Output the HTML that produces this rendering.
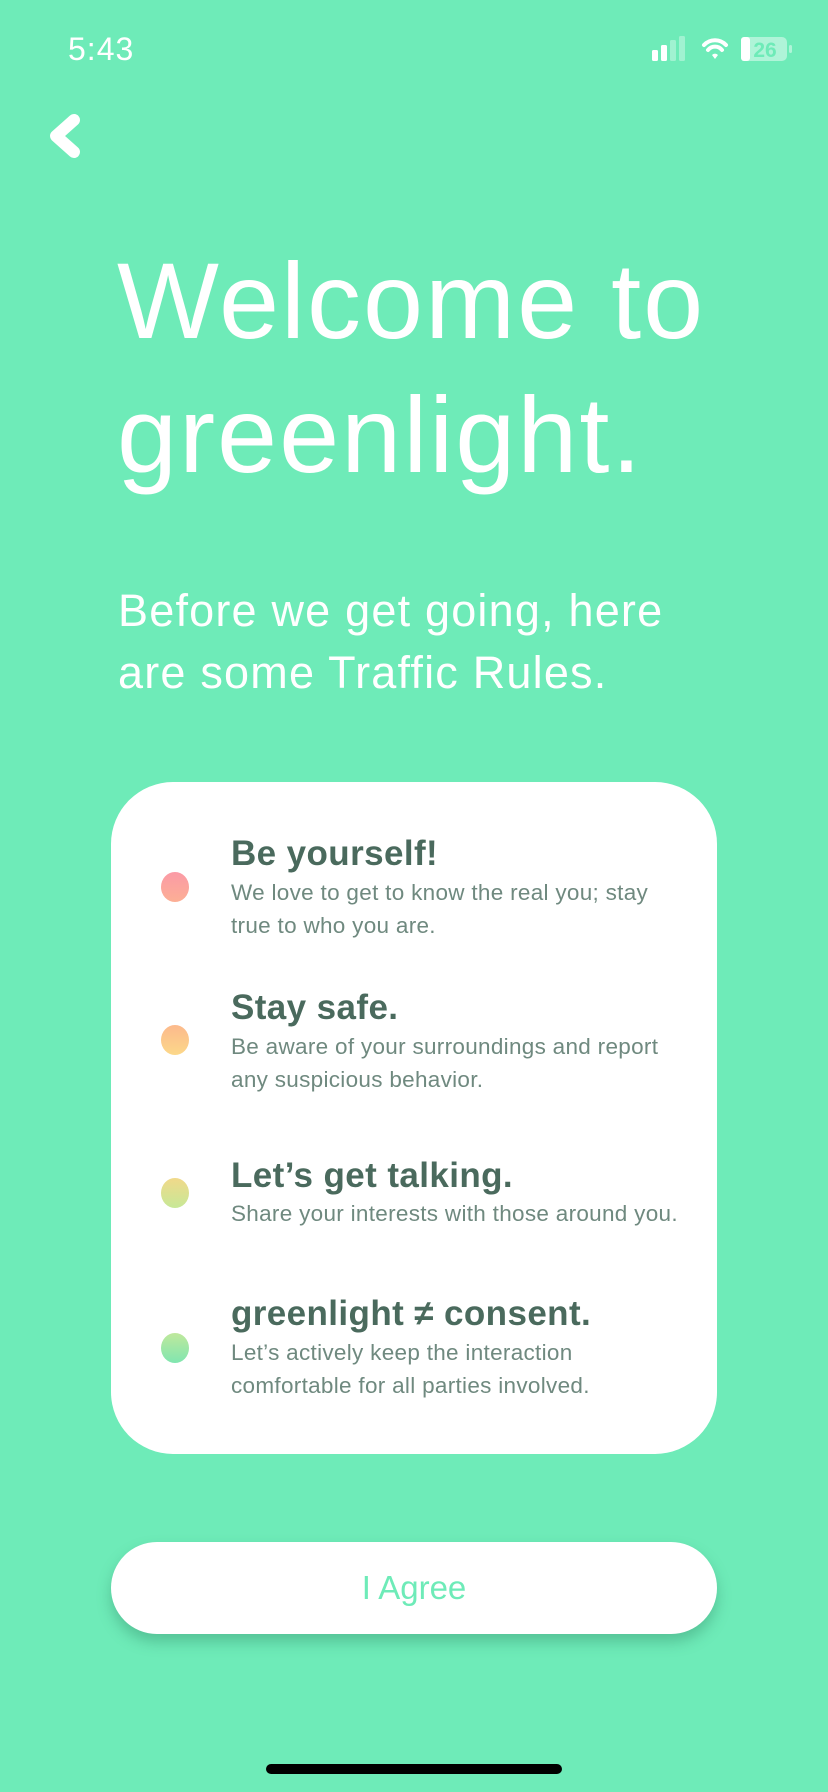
<!DOCTYPE html>
<html><head><meta charset="utf-8"><style>
*{margin:0;padding:0;box-sizing:border-box}
body{width:828px;height:1792px;background:#6eebb8;position:relative;overflow:hidden;font-family:"Liberation Sans",sans-serif;color:#fff}
.a{position:absolute;white-space:nowrap}
.t{font-weight:bold;font-size:35px;line-height:1;color:#4a6a5d;letter-spacing:0.4px}
.b{font-size:22.5px;line-height:33px;color:#6f897f;width:450px;overflow:hidden;letter-spacing:0.3px}
.dot{position:absolute;width:28px;height:30px;border-radius:50%;left:161px}
</style></head><body>
<div class="a" style="left:68px;top:33px;font-size:32px;line-height:1;letter-spacing:1px">5:43</div>
<svg class="a" style="left:652px;top:36px" width="150" height="30" viewBox="0 0 150 30">
<rect x="0" y="14" width="6" height="11" rx="1.5" fill="#fff"/>
<rect x="9" y="9" width="6" height="16" rx="1.5" fill="#fff"/>
<rect x="18" y="4" width="6" height="21" rx="1.5" fill="#fff" opacity=".35"/>
<rect x="27" y="0" width="6" height="25" rx="1.5" fill="#fff" opacity=".35"/>
<path d="M52 9 A15 15 0 0 1 74 9" stroke="#fff" stroke-width="4" fill="none" stroke-linecap="round"/>
<path d="M56 14 A9 9 0 0 1 70 14" stroke="#fff" stroke-width="4" fill="none" stroke-linecap="round"/>
<path d="M60 19 L63 23 L66 19 A4 4 0 0 0 60 19Z" fill="#fff"/>
<rect x="89" y="1" width="46" height="24" rx="5" fill="#fff" opacity=".45"/>
<rect x="89" y="1" width="9" height="24" rx="3" fill="#fff"/>
<text x="113" y="21" font-size="21" font-weight="bold" text-anchor="middle" fill="#6eebb8" font-family="Liberation Sans">26</text>
<rect x="137" y="9" width="3" height="8" rx="1.5" fill="#fff" opacity=".45"/>
</svg>
<svg class="a" style="left:44px;top:112px" width="40" height="48" viewBox="0 0 40 48"><path d="M30 8 L12 24 L30 40" stroke="#fff" stroke-width="12" fill="none" stroke-linecap="round" stroke-linejoin="round"/></svg>
<div class="a" style="left:117px;top:234px;font-size:108px;line-height:134px;letter-spacing:2px">Welcome to<br>greenlight.</div>
<div class="a" style="left:118px;top:580px;font-size:45px;line-height:62px;letter-spacing:1.2px">Before we get going, here<br>are some Traffic Rules.</div>
<div class="a" style="left:111px;top:782px;width:606px;height:672px;background:#fff;border-radius:62px"></div>
<div class="dot" style="top:872px;background:linear-gradient(#fb9aa6,#fcaf95)"></div>
<div class="dot" style="top:1025px;background:linear-gradient(#fcb98c,#fcd88a)"></div>
<div class="dot" style="top:1178px;background:linear-gradient(#f1d98a,#c7e897)"></div>
<div class="dot" style="top:1333px;background:linear-gradient(#bfe89c,#80e6b0)"></div>
<div class="a t" style="left:231px;top:836px">Be yourself!</div>
<div class="a b" style="left:231px;top:876px">We love to get to know the real you; stay<br>true to who you are.</div>
<div class="a t" style="left:231px;top:990px">Stay safe.</div>
<div class="a b" style="left:231px;top:1030px">Be aware of your surroundings and report<br>any suspicious behavior.</div>
<div class="a t" style="left:231px;top:1158px">Let’s get talking.</div>
<div class="a b" style="left:231px;top:1197px">Share your interests with those around you.</div>
<div class="a t" style="left:231px;top:1296px">greenlight ≠ consent.</div>
<div class="a b" style="left:231px;top:1336px">Let’s actively keep the interaction<br>comfortable for all parties involved.</div>
<div class="a" style="left:111px;top:1542px;width:606px;height:92px;background:#fff;border-radius:46px;box-shadow:0 8px 14px rgba(40,120,90,.35);text-align:center;line-height:92px;font-size:33px;color:#6eebb8">I Agree</div>
<div class="a" style="left:266px;top:1764px;width:296px;height:10px;border-radius:5px;background:#000"></div>
</body></html>
